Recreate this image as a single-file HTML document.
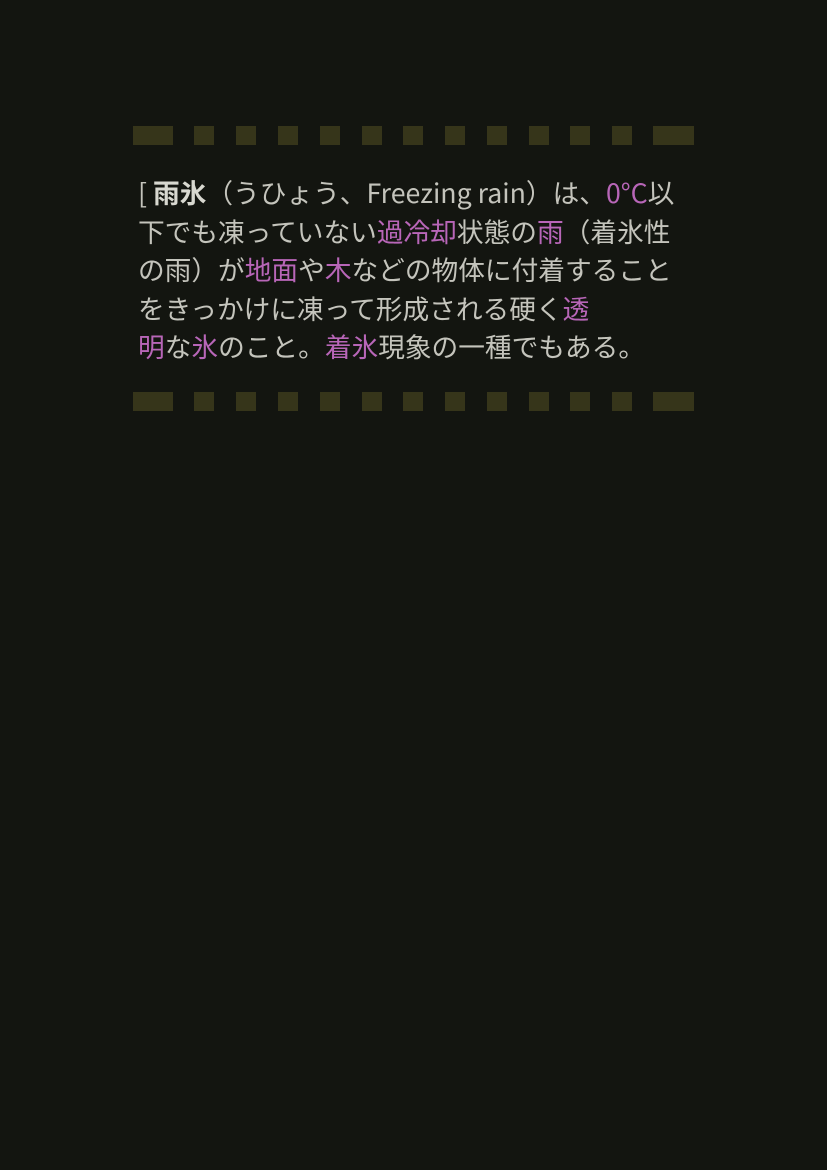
<!DOCTYPE html>
<html><head><meta charset="utf-8"><style>
html,body{margin:0;padding:0;background:#131510;width:827px;height:1170px;overflow:hidden}
.d{position:absolute;height:19px;background:#36351a}
.t{position:absolute;left:138px;top:173px;font-family:"Noto Sans CJK JP",sans-serif;font-size:26.7px;line-height:38.5px;color:#c4c4bc;white-space:nowrap}
.m{color:#b866b8}
b{color:#d8d8d0}
</style></head><body>
<div class="t">[ <b>雨氷</b>（うひょう、Freezing rain）は、<span class="m">0°C</span>以<br>下でも凍っていない<span class="m">過冷却</span>状態の<span class="m">雨</span>（着氷性<br>の雨）が<span class="m">地面</span>や<span class="m">木</span>などの物体に付着すること<br>をきっかけに凍って形成される硬く<span class="m">透</span><br><span class="m">明</span>な<span class="m">氷</span>のこと。<span class="m">着氷</span>現象の一種でもある。</div>
<script>
var xs=[194,236,278,320,362,403,445,487,529,570,612];
[126,392].forEach(function(y){
 var h='<div class="d" style="left:133px;top:'+y+'px;width:40px"></div>';
 xs.forEach(function(x){h+='<div class="d" style="left:'+x+'px;top:'+y+'px;width:20px"></div>';});
 h+='<div class="d" style="left:653px;top:'+y+'px;width:41px"></div>';
 document.body.insertAdjacentHTML('beforeend',h);
});
</script>
</body></html>
